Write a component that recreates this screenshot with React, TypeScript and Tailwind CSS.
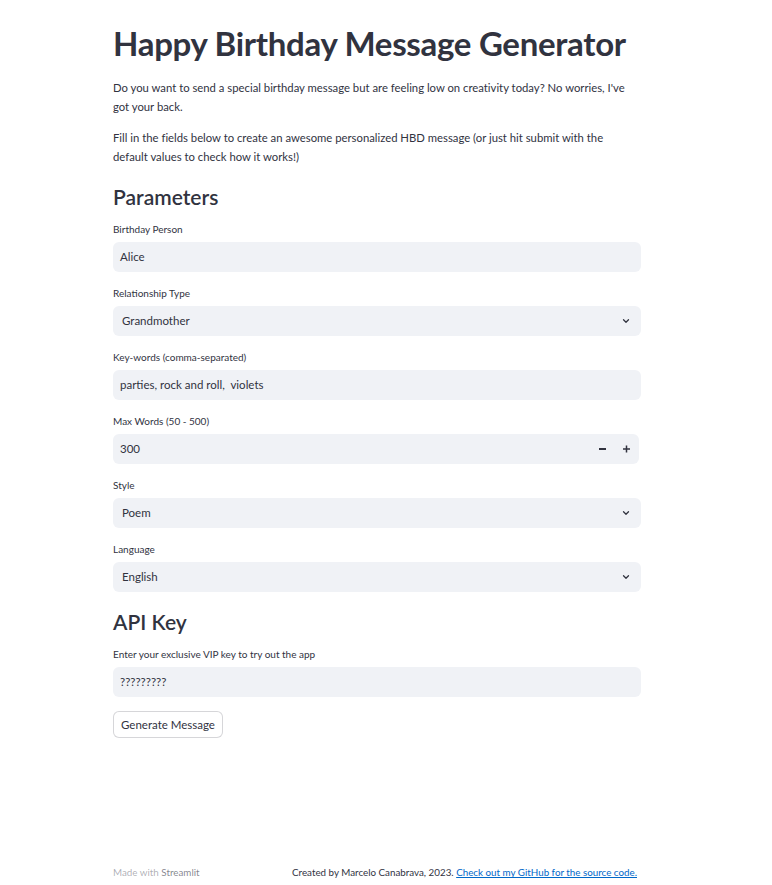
import React from "react";

const Chevron = () => (
  <svg width="10" height="10" viewBox="0 0 24 24" fill="none" stroke="#31333F" strokeWidth="3" strokeLinecap="round" strokeLinejoin="round">
    <polyline points="6 9 12 15 18 9" />
  </svg>
);

const Label = ({ children }: { children: React.ReactNode }) => (
  <div className="h-[22px] text-[10px] leading-[18px] text-[#31333F]">{children}</div>
);

const TextField = ({ label, value }: { label: string; value: string }) => (
  <div>
    <Label>{label}</Label>
    <div className="h-[30px] rounded-[6px] bg-[#f0f2f6] flex items-center px-[7px] text-[11.5px] text-[#31333F] whitespace-pre">{value}</div>
  </div>
);

const SelectField = ({ label, value }: { label: string; value: string }) => (
  <div>
    <Label>{label}</Label>
    <div className="h-[30px] rounded-[6px] bg-[#f0f2f6] flex items-center justify-between pl-[9px] pr-[10px] text-[11.5px] text-[#31333F]">
      <span>{value}</span>
      <Chevron />
    </div>
  </div>
);

export default function App() {
  return (
    <div className="min-h-[885px] bg-white text-[#31333F] flex flex-col" style={{ fontFamily: "Lato, 'Noto Sans', sans-serif" }}>
      <div className="pl-[113px] pt-[21px] w-[641px] flex-1">
        <h1 className="text-[33px] font-bold leading-[44px] tracking-[-0.3px] text-[#31333F]">Happy Birthday Message Generator</h1>
        <div className="mt-[13px] w-[518px] text-[11.3px] leading-[19px]" style={{ fontVariantLigatures: "none" }}>
          <p>Do you want to send a special birthday message but are feeling low on creativity today? No worries, I've got your back.</p>
          <p className="mt-[12px]">Fill in the fields below to create an awesome personalized HBD message (or just hit submit with the default values to check how it works!)</p>
        </div>
        <h2 className="mt-[16px] text-[21px] font-semibold leading-[30px]">Parameters</h2>
        <div className="mt-[8px] flex flex-col gap-[12px]">
          <TextField label="Birthday Person" value="Alice" />
          <SelectField label="Relationship Type" value="Grandmother" />
          <TextField label="Key-words (comma-separated)" value="parties, rock and roll,  violets" />
          <div>
            <Label>Max Words (50 - 500)</Label>
            <div className="h-[30px] mr-[2px] rounded-[6px] bg-[#f0f2f6] flex items-center justify-between pl-[7px] text-[11.5px]">
              <span>300</span>
              <div className="flex items-center">
                <span className="w-[24px] flex justify-center">
                  <svg width="8" height="8" viewBox="0 0 8 8"><rect x="0" y="3" width="7" height="2" fill="#31333F" /></svg>
                </span>
                <span className="w-[24px] flex justify-center">
                  <svg width="8" height="8" viewBox="0 0 8 8"><rect x="0" y="3.25" width="7" height="1.5" fill="#31333F" /><rect x="2.75" y="0.5" width="1.5" height="7" fill="#31333F" /></svg>
                </span>
              </div>
            </div>
          </div>
          <SelectField label="Style" value="Poem" />
          <SelectField label="Language" value="English" />
        </div>
        <h2 className="mt-[15px] text-[21px] font-semibold leading-[30px]">API Key</h2>
        <div className="mt-[8px]">
          <TextField label="Enter your exclusive VIP key to try out the app" value="?????????" />
        </div>
        <div className="mt-[14px]">
          <button className="h-[27px] px-[7px] rounded-[6px] border border-[rgba(49,51,63,0.2)] bg-white text-[11.5px] text-[#31333F]">Generate Message</button>
        </div>
      </div>
      <div className="pl-[113px] w-[637px] pb-[5px] flex items-center justify-between text-[9.8px]">
        <span className="text-[rgba(49,51,63,0.4)]">Made with <span className="text-[rgba(49,51,63,0.6)]">Streamlit</span></span>
        <span>Created by Marcelo Canabrava, 2023. <a className="text-[#0068c9] underline" href="#">Check out my GitHub for the source code.</a></span>
      </div>
    </div>
  );
}
